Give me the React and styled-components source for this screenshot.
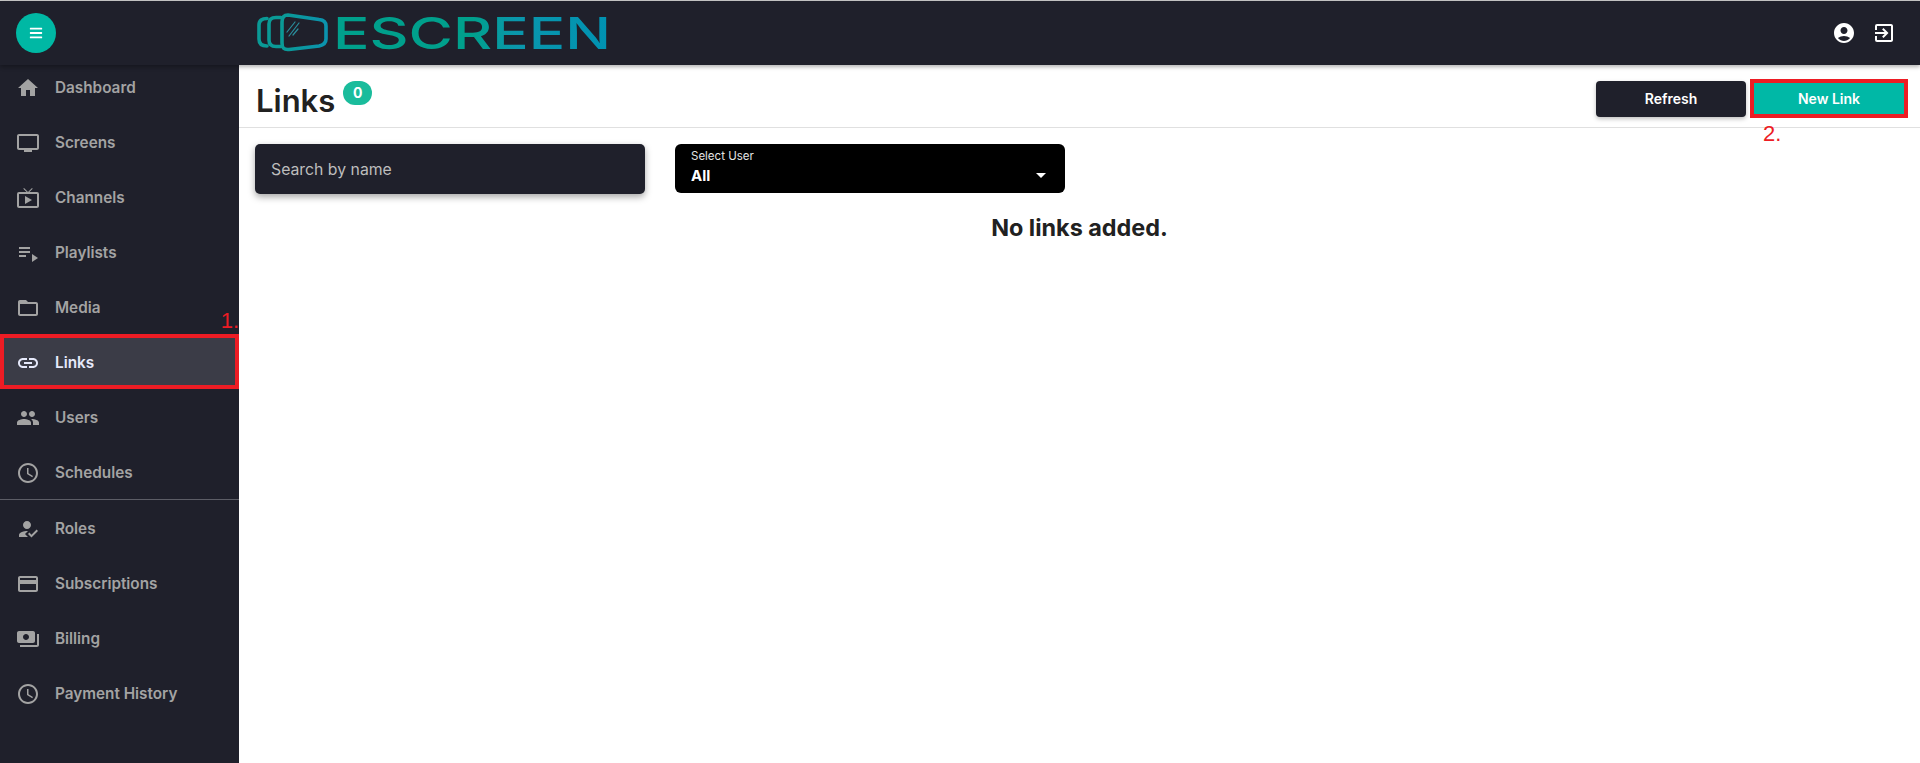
import React from "react";
import styled, { createGlobalStyle } from "styled-components";
import {
  MdHome, MdTv, MdLiveTv, MdPlaylistPlay, MdFolderOpen, MdLink, MdPeople, MdAccessTime,
  MdHowToReg, MdCreditCard, MdPayments, MdAccountCircle, MdExitToApp, MdArrowDropDown,
} from "react-icons/md";
import { FaBars } from "react-icons/fa";

const Global = createGlobalStyle`
  html, body { margin: 0; padding: 0; background: #fff; }
  body { font-family: Inter, "Noto Sans", sans-serif; height: 763px; overflow: hidden; }
  * { box-sizing: border-box; }
`;

const Page = styled.div`
  height: 763px;
  display: flex;
  flex-direction: column;
  border-top: 1px solid #c9c9c9;
`;
const Header = styled.header`
  position: relative;
  z-index: 2;
  flex: 0 0 64px;
  background: #1f202b;
  display: flex;
  align-items: center;
  padding: 0 16px;
  box-shadow: 0 2px 4px rgba(0, 0, 0, 0.3);
`;
const MenuButton = styled.button`
  width: 40px;
  height: 40px;
  border: 0;
  border-radius: 50%;
  padding: 0;
  background: #00b8a4;
  color: #fff;
  display: flex;
  align-items: center;
  justify-content: center;
`;
const LogoSlot = styled.div`
  margin-left: 201px;
  display: flex;
`;
const HeaderIcons = styled.div`
  margin-left: auto;
  display: flex;
  gap: 16px;
  color: #fff;
  padding-right: 8px;
`;
const Body = styled.div`
  flex: 1;
  display: flex;
  min-height: 0;
`;
const Sidebar = styled.nav`
  flex: 0 0 239px;
  background: #1f202b;
`;
const NavList = styled.div`
  margin-top: -6px;
`;
const NavRow = styled.div`
  position: relative;
  height: 55px;
  display: flex;
  align-items: center;
  gap: 15px;
  font-size: 15.3px;
  font-weight: 600;
  color: ${(p) => (p.$active ? "#e6e9fb" : "#a3a3a3")};
  background: ${(p) => (p.$active ? "#3b3c47" : "transparent")};
  border: ${(p) => (p.$active ? "4px solid #ed1c24" : "0")};
  padding: ${(p) => (p.$active ? "2px 0 0 12px" : "2px 0 0 16px")};
`;
const Divider = styled.div`
  height: 1px;
  background: #5c5d66;
`;
const Note = styled.span`
  position: absolute;
  color: #ed1c24;
  font-family: "Liberation Sans", sans-serif;
  font-size: 22px;
  line-height: 24px;
  font-weight: 400;
`;
const NavNote = styled(Note)`
  right: -4px;
  top: -29px;
`;
const Main = styled.main`
  flex: 1;
  min-width: 0;
`;
const TitleBar = styled.div`
  height: 63px;
  display: flex;
  align-items: center;
  padding: 0 12px 0 17px;
  border-bottom: 1px solid #e0e0e0;
`;
const Title = styled.h1`
  margin: 0;
  font-size: 31px;
  line-height: 36px;
  font-weight: 600;
  color: #212121;
  padding-top: 9px;
`;
const Badge = styled.span`
  width: 29px;
  height: 24px;
  margin: -7px 0 0 8px;
  border-radius: 12px;
  background: #1abc9c;
  color: #fff;
  font-size: 14px;
  font-weight: 700;
  display: flex;
  align-items: center;
  justify-content: center;
`;
const Actions = styled.div`
  margin-left: auto;
  display: flex;
  align-items: center;
  gap: 4px;
  padding-top: 5px;
`;
const Refresh = styled.button`
  width: 150px;
  height: 36px;
  border: 0;
  border-radius: 4px;
  background: #1f202b;
  color: #fff;
  font: 600 14px Inter, sans-serif;
  box-shadow: 0 2px 4px rgba(0, 0, 0, 0.25);
`;
const NewLink = styled.button`
  position: relative;
  width: 158px;
  height: 39px;
  border: 4px solid #ed1c24;
  background: #00b8a6;
  color: #fff;
  font: 600 14px Inter, sans-serif;
`;
const ButtonNote = styled(Note)`
  left: 9px;
  top: 39px;
`;
const Filters = styled.div`
  display: flex;
  gap: 30px;
  padding: 16px 0 0 16px;
`;
const Search = styled.div`
  width: 390px;
  height: 50px;
  background: #1f202b;
  border-radius: 5px;
  padding-left: 16px;
  display: flex;
  align-items: center;
  color: #bdbdbd;
  font-size: 15.8px;
  box-shadow: 0 3px 7px rgba(0, 0, 0, 0.35);
`;
const Select = styled.div`
  position: relative;
  width: 390px;
  height: 49px;
  background: #000;
  border-radius: 6px;
  padding: 5px 16px 0;
  color: #fff;
`;
const SelectLabel = styled.div`
  font-size: 11.5px;
  line-height: 14px;
  color: #e4e4e4;
`;
const SelectValue = styled.div`
  font-size: 15px;
  line-height: 20px;
  font-weight: 700;
  margin-top: 3px;
`;
const Caret = styled.span`
  position: absolute;
  right: 12px;
  top: 19px;
  display: flex;
`;
const Empty = styled.div`
  margin-top: 20px;
  text-align: center;
  font-size: 23.4px;
  line-height: 28px;
  font-weight: 700;
  color: #212121;
`;

const Logo = () => (
  <svg width="356" height="56" viewBox="0 -8 356 56" aria-label="ESCREEN logo">
    <defs>
      <linearGradient id="lg" gradientUnits="userSpaceOnUse" x1="78" x2="352" y1="0" y2="0">
        <stop offset="0" stopColor="#00a08c" />
        <stop offset="0.5" stopColor="#00a08c" />
        <stop offset="0.66" stopColor="#0a97ac" />
        <stop offset="1" stopColor="#0092b2" />
      </linearGradient>
      <linearGradient id="sc" gradientUnits="userSpaceOnUse" x1="25" x2="69" y1="0" y2="0">
        <stop offset="0" stopColor="#0a9a96" />
        <stop offset="1" stopColor="#0b93ae" />
      </linearGradient>
    </defs>
    <g fill="none" strokeWidth="3.6" strokeLinecap="round">
      <path d="M10 5.500C5 5.500 2 7 2 12V26C2 31 5 33 10 33" stroke="#0a9a96" />
      <path d="M24 4.500H19C14 4.500 12 7 12 11V27C12 31 14 33.500 19 33.500H24" stroke="#0a9a96" />
      <path d="M31 2C26 2 25 5 25 9V30C25 35 27 37 32 36.500L62 33C67 32 69 30 69 26V13C69 9 67 7 62 6.500Z" stroke="url(#sc)" />
      <path d="M30 19L38 9M32 23L42 10M36 22L41 16" stroke="#2a8f9e" strokeWidth="1.2" />
    </g>
    <text x="76" y="36" fontFamily="Inter, sans-serif" fontSize="44" fontWeight="500" fill="url(#lg)" textLength="278" lengthAdjust="spacingAndGlyphs">ESCREEN</text>
  </svg>
);

const primary = [
  ["Dashboard", MdHome], ["Screens", MdTv], ["Channels", MdLiveTv], ["Playlists", MdPlaylistPlay],
  ["Media", MdFolderOpen], ["Links", MdLink], ["Users", MdPeople], ["Schedules", MdAccessTime],
];
const secondary = [
  ["Roles", MdHowToReg], ["Subscriptions", MdCreditCard], ["Billing", MdPayments], ["Payment History", MdAccessTime],
];

const Row = ({ label, Icon }) => (
  <NavRow $active={label === "Links"}>
    <Icon size={24} />
    {label}
    {label === "Links" && <NavNote>1.</NavNote>}
  </NavRow>
);

export default function App() {
  return (
    <Page>
      <Global />
      <Header>
        <MenuButton aria-label="menu"><FaBars size={14} /></MenuButton>
        <LogoSlot><Logo /></LogoSlot>
        <HeaderIcons>
          <MdAccountCircle size={24} />
          <MdExitToApp size={24} />
        </HeaderIcons>
      </Header>
      <Body>
        <Sidebar>
          <NavList>
            {primary.map(([l, I]) => <Row key={l} label={l} Icon={I} />)}
            <Divider />
            {secondary.map(([l, I]) => <Row key={l} label={l} Icon={I} />)}
          </NavList>
        </Sidebar>
        <Main>
          <TitleBar>
            <Title>Links</Title>
            <Badge>0</Badge>
            <Actions>
              <Refresh>Refresh</Refresh>
              <NewLink>New Link<ButtonNote>2.</ButtonNote></NewLink>
            </Actions>
          </TitleBar>
          <Filters>
            <Search>Search by name</Search>
            <Select>
              <SelectLabel>Select User</SelectLabel>
              <SelectValue>All</SelectValue>
              <Caret><MdArrowDropDown size={24} /></Caret>
            </Select>
          </Filters>
          <Empty>No links added.</Empty>
        </Main>
      </Body>
    </Page>
  );
}
